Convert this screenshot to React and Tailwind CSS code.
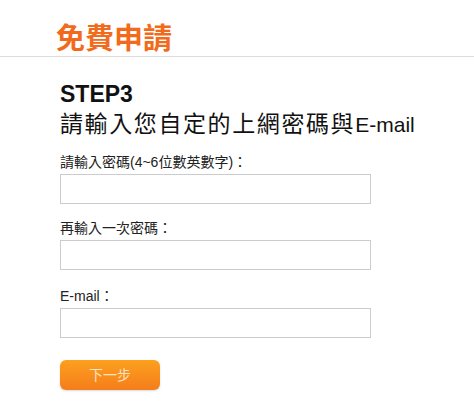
import React from "react";

const cjk = "font-['Liberation_Sans','Noto_Sans_CJK_TC',sans-serif]";

function Field({ label, className }) {
  return (
    <div className={className}>
      <label className="block text-[14px] leading-[20px] text-[#222] mb-[2px]">
        {label}
      </label>
      <input
        type="text"
        className="block w-[311px] h-[30px] border border-[#cccccc] bg-white outline-none px-2 text-[14px]"
      />
    </div>
  );
}

export default function App() {
  return (
    <div className={`w-[474px] h-[416px] bg-white ${cjk}`}>
      <header className="h-[57px] border-b border-[#dddddd] pl-[56px] pt-[22px]">
        <h1 className="text-[29px] leading-[28px] font-bold text-[#f26b1d] font-['Noto_Sans_CJK_TC',sans-serif]">
          免費申請
        </h1>
      </header>
      <main className="pl-[60px] pt-[24px]">
        <h2 className="text-[#111]">
          <span className="block text-[23px] leading-[26px] font-bold font-['Liberation_Sans',sans-serif]">
            STEP3
          </span>
          <span className="block text-[23px] leading-[30px]">
            <span className="tracking-[1.6px] font-['Noto_Sans_CJK_TC',sans-serif]">
              請輸入您自定的上網密碼與
            </span>
            <span className="text-[21px] font-['Liberation_Sans',sans-serif]">E-mail</span>
          </span>
        </h2>
        <form className="mt-[12px]">
          <Field label="請輸入密碼(4~6位數英數字)：" />
          <Field label="再輸入一次密碼：" className="mt-[14px]" />
          <Field label="E-mail：" className="mt-[16px]" />
          <button
            type="button"
            className="mt-[22px] w-[100px] h-[30px] rounded-[6px] bg-gradient-to-b from-[#fca01e] to-[#f47d1c] text-[#fde2bd] text-[14px] shadow-[0_1px_2px_rgba(0,0,0,0.15)]"
          >
            下一步
          </button>
        </form>
      </main>
    </div>
  );
}
